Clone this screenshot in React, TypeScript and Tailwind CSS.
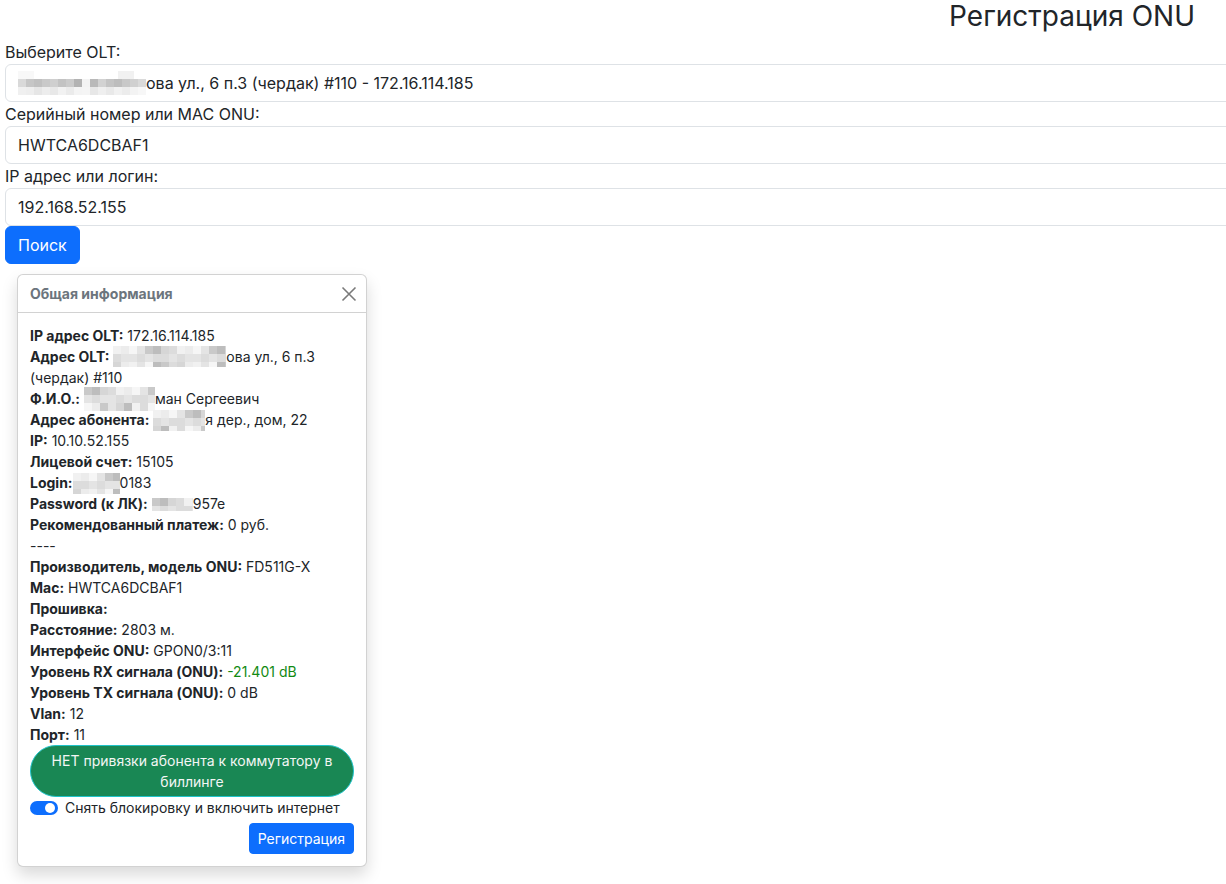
import React from "react";

const shades = [
  "bg-[#f1f1f1]",
  "bg-[#e4e4e4]",
  "bg-[#d6d6d6]",
  "bg-[#ececec]",
  "bg-[#c9c9c9]",
  "bg-[#dcdcdc]",
  "bg-[#f6f6f6]",
  "bg-[#bdbdbd]",
];

function Pix({ cols, rows, seed, cell = 8 }: { cols: number; rows: number; seed: number; cell?: number }) {
  const cells: React.ReactNode[] = [];
  for (let r = 0; r < rows; r++) {
    for (let c = 0; c < cols; c++) {
      const idx = (seed * 7 + r * 5 + c * 3 + ((c * r + seed) % 4)) % shades.length;
      cells.push(<span key={r + "-" + c} className={"block " + shades[idx]} style={{ width: cell, height: cell }} />);
    }
  }
  return (
    <span
      className="inline-grid align-middle"
      style={{ gridTemplateColumns: `repeat(${cols}, ${cell}px)`, gridTemplateRows: `repeat(${rows}, ${cell}px)` }}
    >
      {cells}
    </span>
  );
}

function Row({ label, children }: { label: string; children?: React.ReactNode }) {
  return (
    <div className="h-[21px] leading-[21px] whitespace-nowrap">
      <b className="font-bold">{label}</b> {children}
    </div>
  );
}

export default function App() {
  return (
    <div
      className="w-[1226px] h-[884px] overflow-hidden bg-white text-[#212529] text-[16px] leading-[1.5]"
      style={{ fontFamily: "Inter, 'Noto Sans', sans-serif" }}
    >
      <div className="h-10 flex justify-end pr-[31px]">
        <h3 className="text-[28px] leading-[32px] font-normal">Регистрация ONU</h3>
      </div>
      <div className="pl-[5px]">
        <div className="h-6 leading-6">Выберите OLT:</div>
        <div className="w-[1240px] h-[38px] border border-[#dee2e6] rounded-[6px] pl-[12px] flex items-center">
          <span className="relative inline-flex items-center h-[26px] mr-0">
            <span className="grid grid-rows-[8px_8px_8px] w-[128px] gap-0">
              <span className="flex">
                <span className="w-[16px] h-[8px] bg-[#f8f8f8]" />
                <span className="w-[84px] h-[8px] bg-white" />
                <span className="w-[16px] h-[8px] bg-[#f1f1f1]" />
              </span>
              <span className="flex">
                <span className="w-[8px] h-[8px] bg-[#d9d9d9]" />
                <span className="w-[8px] h-[8px] bg-[#c6c6c6]" />
                <span className="w-[8px] h-[8px] bg-[#c0c0c0]" />
                <span className="w-[8px] h-[8px] bg-[#c9c9c9]" />
                <span className="w-[8px] h-[8px] bg-[#cfcfcf]" />
                <span className="w-[8px] h-[8px] bg-[#c3c3c3]" />
                <span className="w-[8px] h-[8px] bg-[#cbcbcb]" />
                <span className="w-[8px] h-[8px] bg-[#b3b3b3]" />
                <span className="w-[8px] h-[8px] bg-[#f3f3f3]" />
                <span className="w-[8px] h-[8px] bg-[#b9b9b9]" />
                <span className="w-[8px] h-[8px] bg-[#d2d2d2]" />
                <span className="w-[8px] h-[8px] bg-[#c4c4c4]" />
                <span className="w-[8px] h-[8px] bg-[#bdbdbd]" />
                <span className="w-[8px] h-[8px] bg-[#c8c8c8]" />
                <span className="w-[8px] h-[8px] bg-[#d0d0d0]" />
                <span className="w-[8px] h-[8px] bg-[#dadada]" />
              </span>
              <span className="flex">
                <span className="w-[8px] h-[8px] bg-[#f0f0f0]" />
                <span className="w-[8px] h-[8px] bg-[#eeeeee]" />
                <span className="w-[8px] h-[8px] bg-[#e6e6e6]" />
                <span className="w-[8px] h-[8px] bg-[#ededed]" />
                <span className="w-[8px] h-[8px] bg-[#e8e8e8]" />
                <span className="w-[8px] h-[8px] bg-[#f2f2f2]" />
                <span className="w-[8px] h-[8px] bg-[#ebebeb]" />
                <span className="w-[8px] h-[8px] bg-[#f4f4f4]" />
                <span className="w-[8px] h-[8px] bg-[#f5f5f5]" />
                <span className="w-[8px] h-[8px] bg-[#e7e7e7]" />
                <span className="w-[8px] h-[8px] bg-[#efefef]" />
                <span className="w-[8px] h-[8px] bg-[#e9e9e9]" />
                <span className="w-[8px] h-[8px] bg-[#f1f1f1]" />
                <span className="w-[8px] h-[8px] bg-[#ececec]" />
                <span className="w-[8px] h-[8px] bg-[#f3f3f3]" />
                <span className="w-[8px] h-[8px] bg-[#f7f7f7]" />
              </span>
            </span>
          </span>
          <span>ова ул., 6 п.3 (чердак) #110 - 172.16.114.185</span>
        </div>
        <div className="h-6 leading-6">Серийный номер или MAC ONU:</div>
        <div className="w-[1240px] h-[38px] border border-[#dee2e6] rounded-[6px] px-[12px] flex items-center">HWTCA6DCBAF1</div>
        <div className="h-6 leading-6">IP адрес или логин:</div>
        <div className="w-[1240px] h-[38px] border border-[#dee2e6] rounded-[6px] px-[12px] flex items-center">192.168.52.155</div>
        <button className="h-[38px] px-[12px] bg-[#0d6efd] text-white rounded-[6px] border border-[#0d6efd] leading-6">Поиск</button>
      </div>

      <div className="ml-[17px] mt-[10px] w-[350px] border border-[rgba(0,0,0,0.175)] rounded-[6px] shadow-[0_8px_16px_rgba(0,0,0,0.15)] bg-white text-[14px] leading-[21px]">
        <div className="h-[38px] px-[12px] flex items-center justify-between border-b border-[rgba(0,0,0,0.175)] text-[#6c757d]">
          <b className="font-bold">Общая информация</b>
          <svg width="16" height="16" viewBox="0 0 16 16" className="mr-[-3px]">
            <path d="M1.5 1.5 L14.5 14.5 M14.5 1.5 L1.5 14.5" stroke="#7a7a7a" strokeWidth="1.6" fill="none" />
          </svg>
        </div>
        <div className="p-[12px]">
          <Row label="IP адрес OLT:">172.16.114.185</Row>
          <div className="leading-[21px]">
            <b className="font-bold">Адрес OLT:</b>{" "}
            <span className="inline-block align-middle w-[113px] h-[21px] overflow-hidden leading-none -mt-[3px]">
              <Pix cols={15} rows={3} seed={2} cell={8} />
            </span>
            ова ул., 6 п.3 (чердак) #110
          </div>
          <div className="h-[21px] leading-[21px] whitespace-nowrap">
            <b className="font-bold">Ф.И.О.:</b>{" "}
            <span className="inline-block align-middle w-[71px] h-[24px] overflow-hidden leading-none -mt-[2px]">
              <Pix cols={9} rows={3} seed={5} cell={8} />
            </span>
            ман Сергеевич
          </div>
          <div className="h-[21px] leading-[21px] whitespace-nowrap">
            <b className="font-bold">Адрес абонента:</b>{" "}
            <span className="inline-block align-middle w-[52px] h-[21px] overflow-hidden leading-none -mt-[2px]">
              <Pix cols={7} rows={3} seed={1} cell={8} />
            </span>
            я дер., дом, 22
          </div>
          <Row label="IP:">10.10.52.155</Row>
          <Row label="Лицевой счет:">15105</Row>
          <div className="h-[21px] leading-[21px] whitespace-nowrap">
            <b className="font-bold">Login:</b>
            <span className="inline-block align-middle w-[47px] h-[21px] overflow-hidden leading-none -mt-[2px]">
              <Pix cols={6} rows={3} seed={3} cell={8} />
            </span>
            0183
          </div>
          <div className="h-[21px] leading-[21px] whitespace-nowrap">
            <b className="font-bold">Password (к ЛК):</b>{" "}
            <span className="inline-block align-middle w-[41px] h-[14px] overflow-hidden leading-none -mt-[2px]">
              <Pix cols={6} rows={2} seed={4} cell={8} />
            </span>
            957e
          </div>
          <Row label="Рекомендованный платеж:">0 руб.</Row>
          <div className="h-[21px]">----</div>
          <Row label="Производитель, модель ONU:">FD511G-X</Row>
          <Row label="Mac:">HWTCA6DCBAF1</Row>
          <Row label="Прошивка:" />
          <Row label="Расстояние:">2803 м.</Row>
          <Row label="Интерфейс ONU:">GPON0/3:11</Row>
          <Row label="Уровень RX сигнала (ONU):">
            <span className="text-[#128a12]">-21.401 dB</span>
          </Row>
          <Row label="Уровень TX сигнала (ONU):">0 dB</Row>
          <Row label="Vlan:">12</Row>
          <Row label="Порт:">11</Row>
          <div className="w-full rounded-full bg-[#198754] border border-[#20c3c9] text-[#f3f6f4] text-center px-[12px] py-[4px] leading-[21px]">
            НЕТ привязки абонента к коммутатору в биллинге
          </div>
          <div className="h-[21px] flex items-center">
            <span className="relative w-[28px] h-[14px] rounded-full bg-[#0d6efd] mt-[0px]">
              <span className="absolute right-[3px] top-[2px] w-[10px] h-[10px] rounded-full bg-white" />
            </span>
            <span className="ml-[7px]">Снять блокировку и включить интернет</span>
          </div>
          <div className="flex justify-end mt-[5px]">
            <button className="h-[31px] px-[8px] bg-[#0d6efd] border border-[#0d6efd] text-white rounded-[4px] leading-[21px]">Регистрация</button>
          </div>
        </div>
      </div>
    </div>
  );
}
